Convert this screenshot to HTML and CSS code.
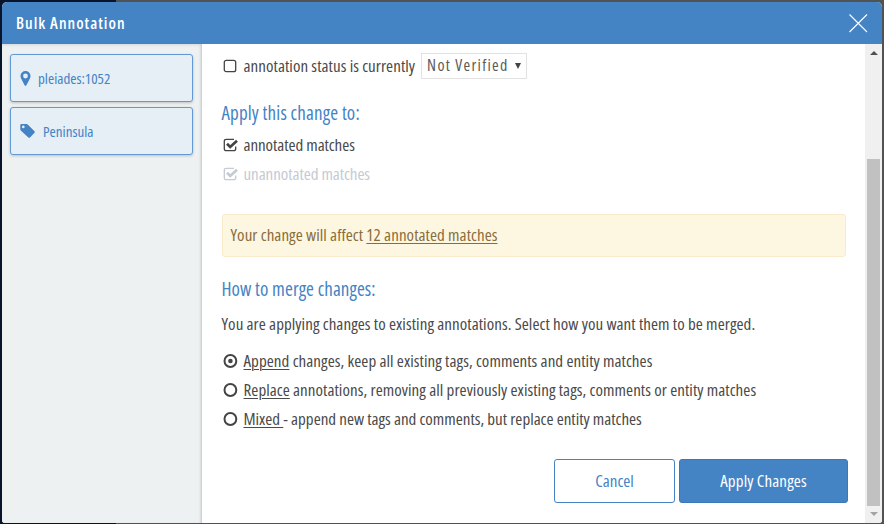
FILE: index.html
```html
<!DOCTYPE html>
<html lang="en">
<head>
<meta charset="utf-8">
<title>Bulk Annotation</title>
<link rel="stylesheet" href="styles.css">
</head>
<body>
<div class="modal">
  <header class="header">
    <h1 class="title"><span>Bulk Annotation</span></h1>
    <svg class="close" width="20" height="20" viewBox="0 0 20 20"><path d="M1.500 1.500L19 19M19 1.500L1.500 19"/></svg>
  </header>
  <div class="body">
    <aside class="sidebar">
      <div class="card">
        <svg class="pin" width="11" height="15" viewBox="0 0 11 15"><path fill-rule="evenodd" d="M5.500 0A5 5 0 0 0 .5 5c0 1 .2 1.800.6 2.500L4.600 14.300q.9 1 1.800 0L9.900 7.500c.4-.7.6-1.500.6-2.500a5 5 0 0 0-5-5zm0 2.600a2.400 2.400 0 1 1 0 4.800a2.400 2.400 0 0 1 0-4.800z"/></svg>
        <span class="t-pleiades">pleiades:1052</span>
      </div>
      <div class="card">
        <svg class="tag" width="16" height="16" viewBox="0 0 16 16"><path fill-rule="evenodd" d="M1.300 1H6.500q.8 0 1.500.7L14.500 8.200q.8.8 0 1.600L10 14.400q-.8.8-1.600 0L1 7.700Q.3 7 .3 6.200V2Q.3 1 1.300 1zM3.300 2.600a1.300 1.300 0 1 0 0 2.600a1.300 1.300 0 0 0 0-2.600z"/></svg>
        <span>Peninsula</span>
      </div>
    </aside>
    <main class="content">
      <div class="option status">
        <svg class="box" width="16" height="16" viewBox="0 0 16 16"><rect x="2.300" y="2.300" width="11.400" height="11.400" rx="2"/></svg>
        <span class="t-status">annotation status is currently</span>
        <div class="select"><span>Not Verified</span><i></i></div>
      </div>
      <h2 class="first"><span class="t-apply">Apply this change to:</span></h2>
      <div class="option">
        <svg class="box" width="16" height="16" viewBox="0 0 16 16"><path d="M13.700 9.500V11.700q0 2-2 2H4.300q-2 0-2-2V4.300q0-2 2-2H12"/><path class="tick" d="M5 6.800L8.200 10L15 3.700"/></svg>
        <span class="t-match">annotated matches</span>
      </div>
      <div class="option disabled">
        <svg class="box" width="16" height="16" viewBox="0 0 16 16"><path d="M13.700 9.500V11.700q0 2-2 2H4.300q-2 0-2-2V4.300q0-2 2-2H12"/><path class="tick" d="M5 6.800L8.200 10L15 3.700"/></svg>
        <span class="t-match">unannotated matches</span>
      </div>
      <div class="notice"><span class="t-long">Your change will affect <u>12 annotated matches</u></span></div>
      <h2><span class="t-how">How to merge changes:</span></h2>
      <p><span class="t-long">You are applying changes to existing annotations. Select how you want them to be merged.</span></p>
      <div class="option">
        <svg class="radio" width="16" height="16" viewBox="0 0 16 16"><circle cx="8.400" cy="8" r="5.900"/><circle class="dot" cx="8.400" cy="8" r="2.300"/></svg>
        <span class="t-long"><u>Append</u> changes, keep all existing tags, comments and entity matches</span>
      </div>
      <div class="option">
        <svg class="radio" width="16" height="16" viewBox="0 0 16 16"><circle cx="8.400" cy="8" r="5.900"/></svg>
        <span class="t-long"><u>Replace</u> annotations, removing all previously existing tags, comments or entity matches</span>
      </div>
      <div class="option">
        <svg class="radio" width="16" height="16" viewBox="0 0 16 16"><circle cx="8.400" cy="8" r="5.900"/></svg>
        <span><u>Mixed </u>- append new tags and comments, but replace entity matches</span>
      </div>
      <div class="actions">
        <div class="button cancel"><span>Cancel</span></div>
        <div class="button apply"><span>Apply Changes</span></div>
      </div>
    </main>
    <div class="scrollbar"><i class="up"></i><div class="thumb"></div><i class="down"></i></div>
  </div>
</div>
</body>
</html>
```
FILE: styles.css
```css
* { box-sizing: border-box; }
body {
  margin: 0;
  width: 884px;
  height: 524px;
  padding: 2px 2px 1px;
  overflow: hidden;
  background: linear-gradient(90deg, #07142b 116px, #505254 116px);
  font-family: "Open Sans", sans-serif;
  font-stretch: 75%;
  font-size: 17px;
  color: #4a4a4a;
}
.modal {
  height: 521px;
  display: flex;
  flex-direction: column;
  border-radius: 5px 5px 3px 3px;
  overflow: hidden;
  background: #fff;
}
.header {
  height: 42px;
  flex: none;
  display: flex;
  align-items: center;
  justify-content: space-between;
  padding: 0 14px;
  background: #4483c4;
  color: #fff;
}
.title { margin: 0; font-size: 16px; font-weight: 600; letter-spacing: 1.020px; line-height: 42px; }
.close { fill: none; stroke: #fff; stroke-width: 1.100; }
.body { flex: 1; min-height: 0; display: flex; }
.sidebar {
  width: 200px;
  flex: none;
  padding: 10px 9px 0 8px;
  background: #edf1f2;
  box-shadow: inset -3px 0 3px -2px #bfc2c4, inset 0 3px 3px -2px #d4d8da;
}
.card {
  height: 48px;
  margin-bottom: 5px;
  padding-left: 9px;
  display: flex;
  align-items: center;
  border: 1px solid #6299d4;
  border-radius: 3px;
  background: #e6eef6;
  box-shadow: 0 1px 3px #0003;
  color: #4483c4;
  font-size: 15px;
}
.card svg { fill: #4483c4; flex: none; }
.pin { margin-right: 7px; }
.tag { margin-right: 7px; }
.content { flex: 1; min-width: 0; padding: 7px 17px 0 19.500px; white-space: nowrap; }
.option { height: 29px; display: flex; align-items: center; line-height: 29px; }
.option svg { flex: none; margin-right: 6px; fill: none; stroke: #444; }
.box { stroke-width: 1.300; }
.box .tick { stroke-width: 2.700; }
.radio { stroke-width: 2; }
.radio .dot { fill: #444; stroke: none; }
.disabled { color: #c5cad3; font-weight: 500; }
.option.disabled svg { stroke: #c5cad3; }
.select {
  width: 106px;
  height: 26px;
  margin-left: 6px;
  padding: 0 5px 0 5px;
  display: flex;
  align-items: center;
  justify-content: space-between;
  border: 1px solid #e2e2e2;
  color: #5a5a5a;
  font-size: 16px;
  letter-spacing: 1.300px;
}
.select i { border: 3.500px solid transparent; border-top: 6px solid #444; border-bottom: 0; }
h2 { margin: 0; font-size: 19px; font-weight: 400; line-height: 36px; height: 36px; color: #4483c4; }
h2.first { margin-top: 15px; height: 35px; }
.notice {
  width: 624px;
  height: 43px;
  margin: 26px 0 14px;
  padding-left: 8px;
  line-height: 39px;
  border: 1px solid #fbeacb;
  border-radius: 3px;
  background: #fdf7e2;
  color: #8a6d3b;
}
u { text-decoration-thickness: 1px; text-underline-offset: 2px; }
p { margin: 0 0 7px; height: 32px; line-height: 33px; }
.t-status { letter-spacing: .06px; }
.t-apply { letter-spacing: .16px; }
.t-match { letter-spacing: -.06px; }
.t-how { letter-spacing: .09px; }
.t-long { letter-spacing: .062px; }
.actions { margin-top: 26px; display: flex; justify-content: flex-end; gap: 4px; }
.button {
  height: 44px;
  line-height: 42px;
  border: 1px solid #4483c4;
  border-radius: 3px;
  text-align: center;
}
.cancel { width: 121px; color: #4483c4; }
.apply { width: 169px; background: #4483c4; color: #fff; font-weight: 500; border-color: #3a78b9; letter-spacing: .12px; }
.scrollbar {
  width: 17px;
  flex: none;
  display: flex;
  flex-direction: column;
  align-items: center;
  background: #f0f0f0;
  padding: 7px 0 6px;
}
.scrollbar i { border: 4px solid transparent; }
.scrollbar .up { border-top: 0; border-bottom: 4px solid #505050; }
.scrollbar .down { border-bottom: 0; border-top: 4px solid #a3a3a3; }
.thumb { width: 13px; height: 347px; margin: 104px 0 6px; background: #c1c1c1; }
```
